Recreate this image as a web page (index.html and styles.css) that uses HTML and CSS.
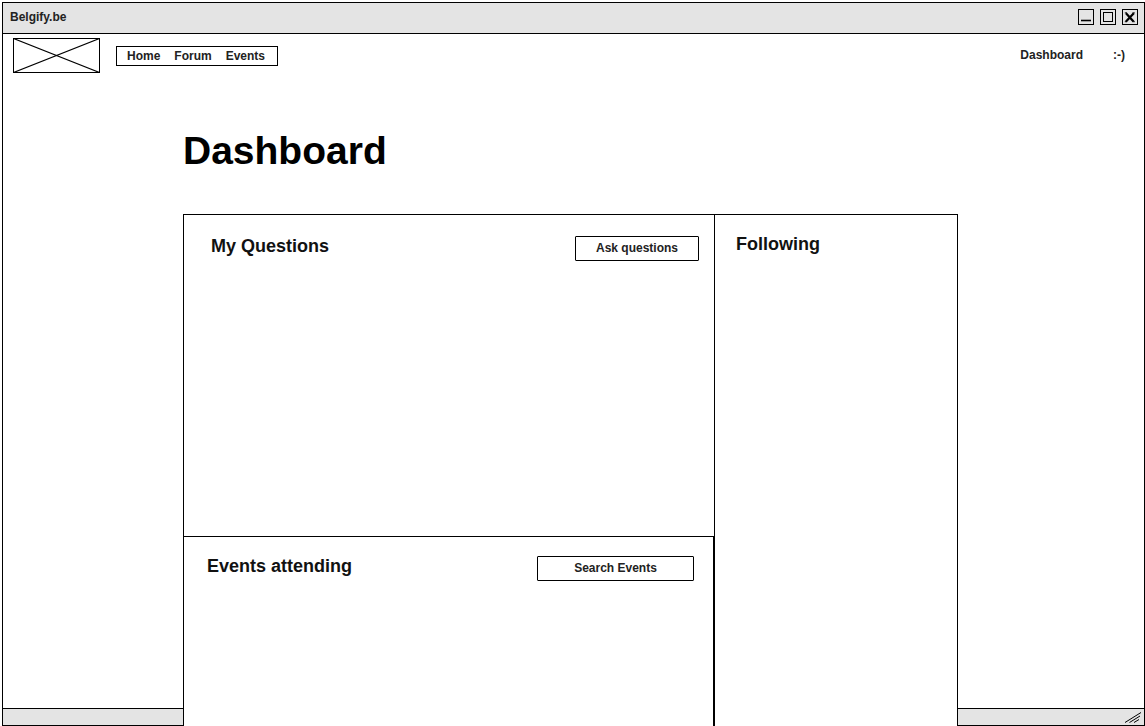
FILE: index.html
```html
<!DOCTYPE html>
<html lang="en">
<head>
  <meta charset="utf-8">
  <meta name="viewport" content="width=device-width, initial-scale=1">
  <title>Belgify.be</title>
  <link rel="stylesheet" href="styles.css">
</head>
<body>
  <div class="window">
    <div class="titlebar">
      <span class="titlebar-name">Belgify.be</span>
      <div class="controls">
        <button class="control" type="button" aria-label="Minimize">
          <svg viewBox="0 0 16 16" width="16" height="16"><rect x=".5" y=".5" width="15" height="15"/><path d="M3 11.5H13" stroke-width="1.6"/></svg>
        </button>
        <button class="control" type="button" aria-label="Maximize">
          <svg viewBox="0 0 16 16" width="16" height="16"><rect x=".5" y=".5" width="15" height="15"/><rect x="3.5" y="3.5" width="9" height="9"/></svg>
        </button>
        <button class="control" type="button" aria-label="Close">
          <svg viewBox="0 0 16 16" width="16" height="16"><rect x=".5" y=".5" width="15" height="15"/><path d="M4 4.2L11.5 12.6M11.8 4.2L4 12.6" stroke-width="2.2"/><path d="M2.8 3.9H5M10.5 3.9H12.8M2.8 12.7H5M10.5 12.7H12.8"/></svg>
        </button>
      </div>
    </div>

    <div class="page">
      <header class="header">
        <a class="logo" href="#" aria-label="Belgify home">
          <svg viewBox="0 0 87 35" width="87" height="35"><rect x=".5" y=".5" width="86" height="34"/><path d="M.5 .5L86.5 34.5M86.5 .5L.5 34.5" stroke-width="1.2"/></svg>
        </a>
        <nav class="nav">
          <a href="#">Home</a>
          <a href="#">Forum</a>
          <a href="#">Events</a>
        </nav>
        <div class="account">
          <a href="#">Dashboard</a>
          <a href="#">:-)</a>
        </div>
      </header>

      <main class="main">
        <h1 class="heading">Dashboard</h1>
        <div class="board">
          <div class="board-main">
            <section class="panel questions">
              <h2 class="panel-title">My Questions</h2>
              <button class="button" type="button">Ask questions</button>
            </section>
            <section class="panel events">
              <h2 class="panel-title">Events attending</h2>
              <button class="button button-wide" type="button">Search Events</button>
            </section>
          </div>
          <aside class="following">
            <h2 class="panel-title">Following</h2>
          </aside>
        </div>
      </main>
    </div>

    <footer class="statusbar">
      <svg class="grip" viewBox="0 0 18 13" width="18" height="13"><path d="M1 11.5L17 1.5M5.5 11.5L16 5M10 11.5L15 8.5"/></svg>
    </footer>
  </div>
</body>
</html>
```

FILE: styles.css
```css
* {
  box-sizing: border-box;
}

body {
  margin: 0;
  padding: 2px 0 0 2px;
  background: #fff;
  color: #222;
  font: bold 12px/16px "Liberation Sans", Arial, sans-serif;
}

a {
  color: inherit;
  text-decoration: none;
}

svg {
  display: block;
  fill: none;
  stroke: #000;
}

h1,
h2 {
  margin: 0;
}

.window {
  display: grid;
  grid-template-columns: 1fr;
  grid-template-rows: auto 1fr 17px;
  min-height: calc(100vh - 2px);
  border: 1px solid #000;
}

.titlebar {
  display: flex;
  align-items: center;
  justify-content: space-between;
  height: 31px;
  padding: 0 6px 2px 7px;
  border-bottom: 1px solid #000;
  background: #e4e4e4;
}

.controls {
  display: flex;
  gap: 6px;
}

.control {
  padding: 0;
  border: 0;
  background: none;
}

/* The page runs over the status bar so the board can cover it. */
.page {
  z-index: 1;
  grid-area: 2 / 1 / 4 / 2;
  display: flex;
  flex-direction: column;
  margin-bottom: -1px;
}

.header {
  display: flex;
  align-items: center;
  gap: 16px;
  padding: 4px 19px 4px 10px;
}

.nav {
  display: flex;
  gap: 14px;
  padding: 1px 12px 1px 10px;
  border: 1px solid #000;
}

.account {
  display: flex;
  gap: 30px;
  margin-left: auto;
  padding-bottom: 2px;
}

.main {
  flex: 1;
  display: flex;
  flex-direction: column;
  margin: 0 186px 0 180px;
  padding-top: 52px;
}

.heading {
  margin-bottom: 41px;
  color: #000;
  font-size: 39px;
  line-height: 44px;
}

.board {
  flex: 1;
  display: grid;
  grid-template-columns: 1fr 243px;
  border: 1px solid #000;
  border-bottom: 0;
  background: #fff;
}

.board-main {
  display: grid;
  grid-template-rows: 321px 1fr;
}

.panel {
  display: flex;
  align-items: flex-start;
  justify-content: space-between;
}

.questions {
  padding: 21px 15px 20px 27px;
}

.events {
  padding: 19px 19px 20px 23px;
  border-top: 1px solid #000;
  border-right: 1px solid #000;
}

.following {
  padding: 19px 21px;
  border-left: 1px solid #000;
}

.panel-title {
  color: #111;
  font-size: 18px;
  line-height: 20px;
}

.button {
  width: 124px;
  height: 25px;
  padding: 0 0 2px;
  border: 1px solid #000;
  border-radius: 1px;
  background: #fff;
  color: inherit;
  font: inherit;
}

.button-wide {
  width: 157px;
}

.statusbar {
  grid-area: 3 / 1;
  display: flex;
  align-items: center;
  justify-content: flex-end;
  padding-right: 2px;
  border-top: 1px solid #000;
  background: #e4e4e4;
}
```
